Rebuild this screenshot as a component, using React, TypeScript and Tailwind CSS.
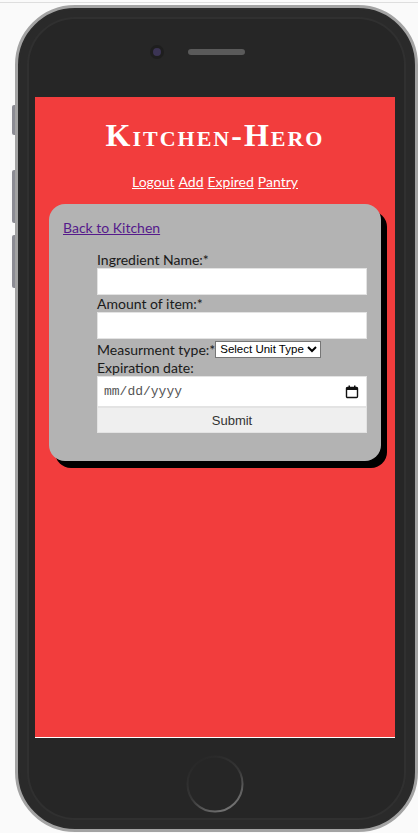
import React from 'react'

function SideButtons() {
  return (
    <div className="flex w-[3px] flex-col">
      <div className="mt-[100px] h-[30px] rounded-l-[2px] bg-[#8c8c94]" />
      <div className="mt-[35px] h-[53px] rounded-l-[2px] bg-[#8c8c94]" />
      <div className="mt-[12px] h-[53px] rounded-l-[2px] bg-[#8c8c94]" />
    </div>
  )
}

function HomeButton() {
  return (
    <svg width="60" height="60" viewBox="0 0 60 60">
      <defs>
        <linearGradient id="hb" x1="0.2" y1="0" x2="0.8" y2="1">
          <stop offset="0%" stopColor="#262626" />
          <stop offset="50%" stopColor="#363636" />
          <stop offset="100%" stopColor="#7a7a7a" />
        </linearGradient>
      </defs>
      <circle cx="30" cy="30" r="27.5" fill="none" stroke="url(#hb)" strokeWidth="2" />
    </svg>
  )
}

function Field({ label, children }: { label: React.ReactNode; children?: React.ReactNode }) {
  return (
    <div className="flex flex-col">
      <label className="text-[14px] leading-[17px] text-[#1a1a1a]">{label}</label>
      {children}
    </div>
  )
}

function AddIngredient() {
  return (
    <div className="mx-[14px] rounded-[16px] bg-[#b3b3b3] px-[14px] pb-[28px] pt-[15px] leading-[17px] shadow-[6px_7px_0_#000]">
      <a href="#" className="block text-[14px] leading-[17px] text-[#551a8b] underline">
        Back to Kitchen
      </a>
      <form className="ml-[34px] mt-[15px] flex w-[270px] flex-col">
        <Field label="Ingredient Name:*">
          <input className="h-[27px] border border-[#e3e3e3] bg-white" />
        </Field>
        <Field label="Amount of item:*">
          <input className="h-[27px] border border-[#e3e3e3] bg-white" />
        </Field>
        <div className="flex h-[20px] items-center text-[14px] leading-[17px] text-[#1a1a1a]">
          <span>Measurment type:*</span>
          <select className="h-[17px] border border-[#767676] bg-white text-[11.5px] leading-[14px] text-black" style={{ fontFamily: '"Liberation Sans", Arial, sans-serif' }}>
            <option>Select Unit Type</option>
          </select>
        </div>
        <Field label="Expiration date:">
          <div className="flex h-[31px] items-center justify-between border border-[#e3e3e3] bg-white pl-[6px] pr-[7px]">
            <span className="text-[13px] text-[#555]" style={{ fontFamily: '"Liberation Mono", monospace' }}>mm/dd/yyyy</span>
            <svg width="14" height="14" viewBox="0 0 14 14">
              <rect x="1.5" y="2.5" width="11" height="10" rx="1" fill="none" stroke="#111" strokeWidth="1.4" />
              <rect x="1.5" y="2.5" width="11" height="2.5" fill="#111" />
              <rect x="3.5" y="0.5" width="1.5" height="3" fill="#111" />
              <rect x="9" y="0.5" width="1.5" height="3" fill="#111" />
            </svg>
          </div>
        </Field>
        <button type="button" className="h-[26px] border border-[#e3e3e3] bg-[#efefef] text-[13px] text-[#333]" style={{ fontFamily: '"Liberation Sans", Arial, sans-serif' }}>
          Submit
        </button>
      </form>
    </div>
  )
}

export default function App() {
  return (
    <div className="h-[833px] w-[418px] overflow-hidden bg-[#fafafa]" style={{ fontFamily: 'Lato, "Noto Sans", sans-serif' }}>
      <div className="mt-[2px] h-px bg-[#dedede]" />
      <div className="flex pl-[12px] pt-[2px]">
        <SideButtons />
        <div className="h-[827px] w-[403px] rounded-[60px] border-[3px] border-[#a3a3a3] bg-[#262626] shadow-[inset_0_0_0_2px_#2b2b2b,inset_0_0_0_9px_#2a2a2a,inset_0_0_0_11px_#303030]">
          <div className="flex h-[89px] items-start pl-[135px] pt-[40px]">
            <div className="h-[8px] w-[8px] rounded-full bg-[#3b3454] shadow-[0_0_0_3px_#1e1e1e]" />
            <div className="ml-[27px] mt-[1px] h-[6px] w-[57px] rounded-full bg-[#5a5a5a]" />
          </div>
          <div className="ml-[17px] flex h-[641px] w-[360px] flex-col border-b border-white bg-[#f23d3d]">
            <h1 className="mt-[20px] text-center text-[32px] font-bold leading-[36px] tracking-[2px] text-white [font-variant:small-caps]" style={{ fontFamily: '"Liberation Serif", serif' }}>
              Kitchen-Hero
            </h1>
            <nav className="mt-[20px] flex justify-center gap-[4px] text-[14px] leading-[17px] text-white">
              <a href="#" className="underline">Logout</a>
              <a href="#" className="underline">Add</a>
              <a href="#" className="underline">Expired</a>
              <a href="#" className="underline">Pantry</a>
            </nav>
            <div className="mt-[14px]">
              <AddIngredient />
            </div>
          </div>
          <div className="flex justify-center pr-[4px] pt-[16px]">
            <HomeButton />
          </div>
        </div>
      </div>
    </div>
  )
}
